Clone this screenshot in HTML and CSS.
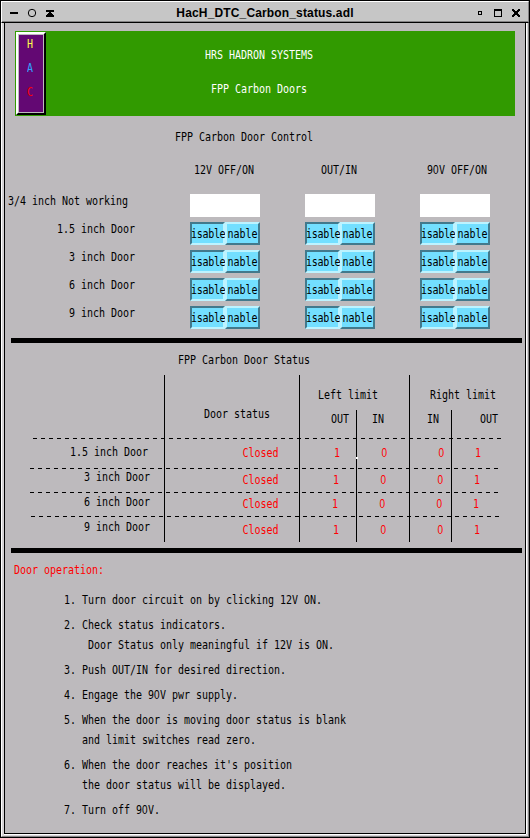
FILE: index.html
```html
<!DOCTYPE html>
<html lang="en">
<head>
<meta charset="utf-8">
<title>HacH_DTC_Carbon_status.adl</title>
<link rel="stylesheet" href="styles.css">
</head>
<body>
<div class="window">
  <header class="titlebar">
    <svg class="tools" width="56" height="20" viewBox="2 2 56 20" shape-rendering="crispEdges">
      <path d="M10 12h8v2h-8zM46 10h8v2h-8zM49 12h2v1h1v1h1v1h1v2h-8v-2h1v-1h1v-1h1z"/>
      <circle cx="32" cy="13" r="3.7" fill="none" stroke="#000" shape-rendering="auto"/>
    </svg>
    <h1>HacH_DTC_Carbon_status.adl</h1>
    <svg class="tools" width="56" height="20" viewBox="472 2 56 20" shape-rendering="crispEdges">
      <path fill-rule="evenodd" d="M478 11h4v4h-4zM479 12v2h2v-2zM494 9h8v8h-8zM495 11v5h6v-5z"/>
      <path d="M512 9h2v1h1v1h2v-1h1v-1h2v2h-1v1h-1v2h1v1h1v2h-2v-1h-1v-1h-2v1h-1v1h-2v-2h1v-1h1v-2h-1v-1h-1z"/>
    </svg>
  </header>
  <div class="frame">
  <main class="content">
    <section class="banner">
      <div class="hac"><p class="t h">H</p><p class="t a">A</p><p class="t c">C</p></div>
      <div class="names"><p class="t">HRS HADRON SYSTEMS</p><p class="t">FPP Carbon Doors</p></div>
    </section>

    <section class="control">
      <h2 class="t">FPP Carbon Door Control</h2>
      <div class="control-row heads"><span></span><p class="t">12V OFF/ON</p><p class="t">OUT/IN</p><p class="t">9<i>0</i>V OFF/ON</p></div>
      <div class="control-row first"><p class="t">3/4 inch Not working</p><b class="blank"></b><b class="blank"></b><b class="blank"></b></div>
      <div class="control-row"><p class="t">1.5 inch Door</p><div class="pair"><button class="off"><span class="t">isable</span></button><button><span class="t">nable</span></button></div><div class="pair"><button class="off"><span class="t">isable</span></button><button><span class="t">nable</span></button></div><div class="pair"><button class="off"><span class="t">isable</span></button><button><span class="t">nable</span></button></div></div>
      <div class="control-row"><p class="t">3 inch Door</p><div class="pair"><button class="off"><span class="t">isable</span></button><button><span class="t">nable</span></button></div><div class="pair"><button class="off"><span class="t">isable</span></button><button><span class="t">nable</span></button></div><div class="pair"><button class="off"><span class="t">isable</span></button><button><span class="t">nable</span></button></div></div>
      <div class="control-row"><p class="t">6 inch Door</p><div class="pair"><button class="off"><span class="t">isable</span></button><button><span class="t">nable</span></button></div><div class="pair"><button class="off"><span class="t">isable</span></button><button><span class="t">nable</span></button></div><div class="pair"><button class="off"><span class="t">isable</span></button><button><span class="t">nable</span></button></div></div>
      <div class="control-row"><p class="t">9 inch Door</p><div class="pair"><button class="off"><span class="t">isable</span></button><button><span class="t">nable</span></button></div><div class="pair"><button class="off"><span class="t">isable</span></button><button><span class="t">nable</span></button></div><div class="pair"><button class="off"><span class="t">isable</span></button><button><span class="t">nable</span></button></div></div>
    </section>

    <section class="status">
      <h2 class="t">FPP Carbon Door Status</h2>
      <div class="table">
        <div class="thead">
          <div></div>
          <div class="door"><p class="t">Door status</p></div>
          <div class="limit left"><p class="t">Left limit</p><div class="sub"><p class="t">OUT</p><p class="t">IN</p></div></div>
          <div class="limit right"><p class="t">Right limit</p><div class="sub"><p class="t">IN</p><p class="t">OUT</p></div></div>
        </div>
        <div class="row r1"><div><p class="t">1.5 inch Door</p></div><div><p class="t">Closed</p></div><div><p class="t">1</p></div><div class="spot"><p class="t"><i>0</i></p></div><div><p class="t"><i>0</i></p></div><div><p class="t">1</p></div></div>
        <div class="row r2"><div><p class="t">3 inch Door</p></div><div><p class="t">Closed</p></div><div><p class="t">1</p></div><div><p class="t"><i>0</i></p></div><div><p class="t"><i>0</i></p></div><div><p class="t">1</p></div></div>
        <div class="row r3"><div><p class="t">6 inch Door</p></div><div><p class="t">Closed</p></div><div><p class="t">1</p></div><div><p class="t"><i>0</i></p></div><div><p class="t"><i>0</i></p></div><div><p class="t">1</p></div></div>
        <div class="row r4"><div><p class="t">9 inch Door</p></div><div><p class="t">Closed</p></div><div><p class="t">1</p></div><div><p class="t"><i>0</i></p></div><div><p class="t"><i>0</i></p></div><div><p class="t">1</p></div></div>
      </div>
    </section>

    <section class="operation">
      <h2 class="t">Door operation:</h2>
      <div class="steps">
        <div><p class="t">1. Turn door circuit on by clicking 12V ON.</p></div>
        <div><p class="t">2. Check status indicators.</p><p class="t">    Door Status only meaningful if 12V is ON.</p></div>
        <div><p class="t">3. Push OUT/IN for desired direction.</p></div>
        <div><p class="t">4. Engage the 9<i>0</i>V pwr supply.</p></div>
        <div><p class="t">5. When the door is moving door status is blank</p><p class="t">   and limit switches read zero.</p></div>
        <div><p class="t">6. When the door reaches it's position</p><p class="t">   the door status will be displayed.</p></div>
        <div><p class="t">7. Turn off 9<i>0</i>V.</p></div>
      </div>
    </section>
  </main>
  </div>
</div>
</body>
</html>
```
FILE: styles.css
```css
* { box-sizing: border-box; margin: 0; padding: 0; }
body { width: 530px; height: 838px; overflow: hidden; background: #000; }

/* Tall, narrow terminal-style lettering on a 6px advance */
.t {
  display: block;
  height: 13px;
  font: 10px/13px "DejaVu Sans Mono", monospace;
  letter-spacing: -0.02px;
  white-space: pre;
  transform: translateY(-1px) scaleY(1.25);
}
.banner .t, button .t { transform: scaleY(1.25); }
.t i {
  font-family: "Liberation Sans", sans-serif;
  font-style: normal;
  letter-spacing: 0.44px;
  line-height: 1;
}

.window { height: 838px; border: 1px solid #000; background: #c6c6c6; }
.titlebar {
  display: flex;
  justify-content: space-between;
  height: 22px;
  border: 1px solid #fff;
  border-right-color: #848284;
  border-bottom: 1px solid #000;
  box-shadow: inset 0 -1px #848284;
}
.tools { display: block; }
.titlebar h1 {
  padding-top: 1px;
  height: 20px;
  font: bold 12px/20px "Liberation Sans", Arial, sans-serif;
  letter-spacing: 0.15px;
  white-space: nowrap;
}
.frame {
  height: 814px;
  padding: 0 2px 2px;
  background: #d6d3d6;
  border-left: 1px solid #fff;
  border-right: 1px solid #848284;
  border-bottom: 1px solid #848284;
}
.content {
  height: 811px;
  border: 1px solid #000;
  border-top: 0;
  background: #bdbabd;
  box-shadow: 0 1px #fff, 1px 0 #fff;
}

.banner {
  display: flex;
  width: 500px;
  height: 85px;
  margin-left: 10px;
  position: relative;
  top: 8px;
  padding: 1px;
  background: #319a00;
  color: #fff;
}
.hac {
  width: 30px;
  height: 83px;
  border: 2px solid #fff;
  border-right-color: #000;
  border-bottom-color: #000;
  background: #630873;
  box-shadow: inset 0 0 0 1px #bdbabd;
  padding: 3px 0 0 9px;
}
.hac .t { margin-bottom: 11px; }
.h { color: #ffff4a; }
.a { color: #31a2ff; }
.c { color: #f00; }
.names { padding: 16px 0 0 159px; }
.names .t + .t { margin: 21px 0 0 6px; }

.control { padding-top: 23px; height: 230px; }
.control h2 { margin-left: 170px; }
.control-row {
  display: grid;
  grid-template-columns: 140px 70px 70px 70px;
  column-gap: 45px;
  height: 28px;
}
.control-row > .t:first-child { width: 130px; margin-top: 1px; text-align: right; }
.control-row.heads { padding-top: 20px; height: 50px; }
.heads .t:nth-child(2) { padding-left: 4px; }
.heads .t:nth-child(3) { padding-left: 16px; }
.heads .t:nth-child(4) { padding-left: 7px; }
.control-row.first > .t:first-child { text-align: left; padding-left: 3px; }
.blank { height: 23px; background: #fff; }
.pair { display: flex; height: 23px; }
button {
  display: flex;
  align-items: center;
  position: relative;
  width: 35px;
  height: 23px;
  border: 2px solid;
  border-color: #bdf3ff #42798c #42798c #bdf3ff;
  background: #73dfff;
  color: #000;
}
button.off { border-color: #42798c #bdf3ff #bdf3ff #42798c; }
button .t { margin-left: 0.5px; }
button.off .t { margin-left: -1px; letter-spacing: -0.3px; }

.status {
  width: 511px;
  height: 215px;
  margin-left: 6px;
  padding-top: 11px;
  border-top: 5px solid #000;
  border-bottom: 5px solid #000;
}
.status h2 { margin: 0 0 8px 167px; }
.table { width: 480px; margin-left: 19px; }
.thead { display: grid; grid-template-columns: 134px 135px 110px 1fr; height: 63px; }
.thead > div + div { border-left: 1px solid #000; }
.door { padding: 33px 0 0 39px; }
.limit { padding-top: 14px; }
.left > .t { margin-left: 18px; }
.right > .t { margin-left: 20px; }
.sub {
  display: grid;
  grid-template-columns: 56px 1fr;
  height: 28px;
  margin-top: 8px;
  padding-top: 3px;
  background: linear-gradient(#000, #000) 56px 0 / 1px 28px no-repeat;
}
.right .sub { grid-template-columns: 41px 1fr; background-position: 41px 0; }
.left .sub .t:first-child { padding-left: 31px; }
.left .sub .t:last-child { padding-left: 16px; }
.right .sub .t:first-child { padding-left: 17px; }
.right .sub .t:last-child { padding-left: 29px; }

.row {
  display: grid;
  grid-template-columns: 134px 135px 57px 53px 42px 1fr;
  height: 24px;
  background: repeating-linear-gradient(90deg, #000 0 4px, transparent 4px 8px) 0 0 / 468px 1px no-repeat;
}
.row > div { padding-top: 6px; color: #f00; }
.row > div + div { border-left: 1px solid #000; }
.row > div:nth-child(1) { padding: 3px 0 0 54px; color: #000; }
.row > div:nth-child(2) { padding-left: 77.5px; }
.row > div:nth-child(3) { padding-left: 34px; }
.row > div:nth-child(4) { padding-left: 24.5px; }
.row > div:nth-child(5) { padding-left: 28.5px; }
.row > div:nth-child(6) { padding-left: 23px; }
.r1 { height: 30px; background-position: 3px 0; }
.r1 > div { padding-top: 9px; }
.r1 > div:nth-child(1) { padding: 8px 0 0 40px; }
.r3 > div:nth-child(1) { padding-top: 4px; }
.r4 { height: 26px; background-position: 1px 0; }
.r4 > div { padding-top: 8px; }
.r4 > div:nth-child(1) { padding-top: 5px; }
.r2 > div:nth-child(n+3) .t, .r4 > div:nth-child(n+3) .t { margin-left: -1px; }
.r3 > div:nth-child(n+3) .t { margin-left: -2px; }
.spot { position: relative; }
.spot::before { content: ""; position: absolute; left: -1px; top: 19px; width: 2px; height: 2px; background: #fff; }

.operation { padding: 11px 0 0 9px; }
.operation h2 { color: #f00; }
.steps { display: flex; flex-direction: column; gap: 12px; margin: 17px 0 0 50px; }
.steps .t + .t { margin-top: 7px; }
```
